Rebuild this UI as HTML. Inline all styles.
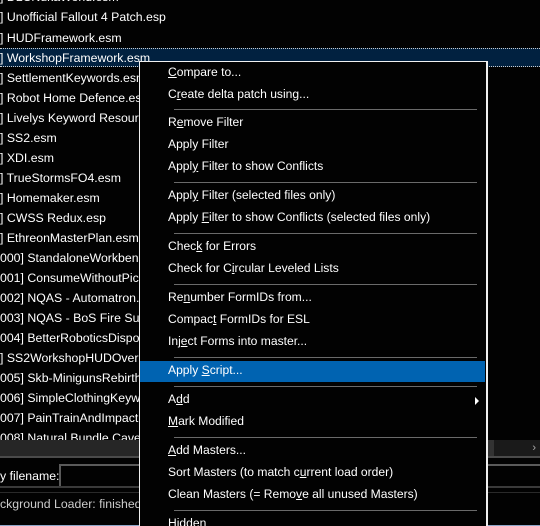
<!DOCTYPE html>
<html><head><style>
*{margin:0;padding:0;box-sizing:border-box}
html,body{width:540px;height:526px;overflow:hidden}
body{background:#020202;position:relative;font-family:"Liberation Sans",sans-serif;font-size:12.1px;color:#fff}
.r{position:absolute;left:0;height:20px;line-height:20px;white-space:nowrap;font-size:12.3px}
.sel{position:absolute;left:0;top:48px;width:540px;height:19px;background:#012140;border-top:1px dotted #ccc;border-bottom:1px dotted #ccc}
.menu{position:absolute;left:139px;top:61px;width:349px;height:466px;background:#020202;border:1px solid #f0f0f0;border-right:2px solid #f0f0f0;border-bottom:none;overflow:hidden}
.i{position:absolute;left:28px;height:22px;line-height:21px;white-space:nowrap}
.s{position:absolute;left:34px;width:303px;height:1px;background:#6a6a6a}
u{text-decoration:underline;text-underline-offset:1px}
</style></head><body>
<div class="sel"></div>
<div class="r" style="top:-13px">] DLCNukaWorld.esm</div>
<div class="r" style="top:7px">] Unofficial Fallout 4 Patch.esp</div>
<div class="r" style="top:28px">] HUDFramework.esm</div>
<div class="r" style="top:48px">] WorkshopFramework.esm</div>
<div class="r" style="top:68px">] SettlementKeywords.esm</div>
<div class="r" style="top:88px">] Robot Home Defence.esm</div>
<div class="r" style="top:108px">] Livelys Keyword Resources</div>
<div class="r" style="top:128px">] SS2.esm</div>
<div class="r" style="top:148px">] XDI.esm</div>
<div class="r" style="top:168px">] TrueStormsFO4.esm</div>
<div class="r" style="top:188px">] Homemaker.esm</div>
<div class="r" style="top:208px">] CWSS Redux.esp</div>
<div class="r" style="top:228px">] EthreonMasterPlan.esm</div>
<div class="r" style="top:248px">000] StandaloneWorkbenches</div>
<div class="r" style="top:268px">001] ConsumeWithoutPickup</div>
<div class="r" style="top:288px">002] NQAS - Automatron.esp</div>
<div class="r" style="top:308px">003] NQAS - BoS Fire Support</div>
<div class="r" style="top:328px">004] BetterRoboticsDisposal</div>
<div class="r" style="top:348px">] SS2WorkshopHUDOverride</div>
<div class="r" style="top:368px">005] Skb-MinigunsRebirth</div>
<div class="r" style="top:388px">006] SimpleClothingKeywords</div>
<div class="r" style="top:408px">007] PainTrainAndImpactLanding</div>
<div class="r" style="top:428px;height:12px;overflow:hidden">008] Natural Bundle Cave</div>
<div style="position:absolute;left:0;top:440px;width:540px;height:17px;background:#262626"></div>
<div style="position:absolute;left:488px;top:440px;width:52px;height:17px;background:#1a1a1a;border-left:6px solid #333;color:#aaa;font-size:11px;line-height:17px;text-align:right;padding-right:4px">›</div>
<div style="position:absolute;left:0;top:456px;width:540px;height:2px;background:#4a4a4a"></div>
<div style="position:absolute;left:0;top:465px;line-height:22px;font-size:12.3px">y filename:</div>
<div style="position:absolute;left:59px;top:464px;width:500px;height:24px;border:2px solid #5a5a5a"></div>
<div style="position:absolute;left:0;top:486px;width:540px;height:2px;background:#3a3a3a"></div>
<div style="position:absolute;left:0;top:492px;width:540px;height:1px;background:#2a2a2a"></div>
<div style="position:absolute;left:0;top:493px;line-height:22px;color:#ccc;font-size:12.3px">ckground Loader: finished</div>
<div style="position:absolute;left:0;top:525px;width:540px;height:1px;background:#8ea6c8"></div>
<div class="menu">
<div class="i" style="top:0px"><u>C</u>ompare to...</div>
<div class="i" style="top:22px">C<u>r</u>eate delta patch using...</div>
<div class="s" style="top:47px"></div>
<div class="i" style="top:50px">R<u>e</u>move Filter</div>
<div class="i" style="top:72px">Apply Filter</div>
<div class="i" style="top:94px">Appl<u>y</u> Filter to show Conflicts</div>
<div class="s" style="top:120px"></div>
<div class="i" style="top:123px">Appl<u>y</u> Filter (selected files only)</div>
<div class="i" style="top:145px">Apply <u>F</u>ilter to show Conflicts (selected files only)</div>
<div class="s" style="top:171px"></div>
<div class="i" style="top:174px">Chec<u>k</u> for Errors</div>
<div class="i" style="top:196px">Check for C<u>i</u>rcular Leveled Lists</div>
<div class="s" style="top:222px"></div>
<div class="i" style="top:225px">Re<u>n</u>umber FormIDs from...</div>
<div class="i" style="top:247px">Compac<u>t</u> FormIDs for ESL</div>
<div class="i" style="top:269px">Inj<u>e</u>ct Forms into master...</div>
<div class="s" style="top:295px"></div>
<div style="position:absolute;left:0;top:299px;width:345px;height:21px;background:#0063b1"></div>
<div class="i" style="top:298px">Apply <u>S</u>cript...</div>
<div class="s" style="top:324px"></div>
<div class="i" style="top:327px">A<u>d</u>d</div>
<div style="position:absolute;left:335px;top:335px;width:0;height:0;border-left:4px solid #fff;border-top:4px solid transparent;border-bottom:4px solid transparent"></div>
<div class="i" style="top:349px"><u>M</u>ark Modified</div>
<div class="s" style="top:375px"></div>
<div class="i" style="top:378px"><u>A</u>dd Masters...</div>
<div class="i" style="top:400px">Sort Masters (to match c<u>u</u>rrent load order)</div>
<div class="i" style="top:422px">Clean Masters (= Remo<u>v</u>e all unused Masters)</div>
<div class="s" style="top:448px"></div>
<div class="i" style="top:451px">Hidden</div>
</div>
</body></html>
